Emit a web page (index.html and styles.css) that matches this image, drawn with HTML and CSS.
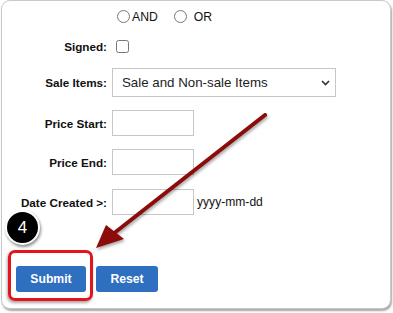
FILE: index.html
```html
<!DOCTYPE html>
<html>
<head>
<meta charset="utf-8">
<link rel="stylesheet" href="styles.css">
</head>
<body>
<div class="stage">
  <div class="card">
    <form class="form">
      <div class="row row-radio">
        <span class="label"></span>
        <div class="ctrl">
          <input type="radio" name="op" class="radio radio-and"><span class="opt">AND</span>
          <input type="radio" name="op" class="radio radio-or"><span class="opt">OR</span>
        </div>
      </div>
      <div class="row row-signed">
        <span class="label">Signed:</span>
        <div class="ctrl"><input type="checkbox" class="check"></div>
      </div>
      <div class="row row-sale">
        <span class="label">Sale Items:</span>
        <div class="ctrl">
          <div class="select-wrap">
            <select class="select"><option>Sale and Non-sale Items</option></select>
            <svg class="chev" width="9" height="6" viewBox="0 0 9 6"><path d="M1 1 L4.5 4.5 L8 1" fill="none" stroke="#333" stroke-width="1.6"/></svg>
          </div>
        </div>
      </div>
      <div class="row row-start">
        <span class="label">Price Start:</span>
        <div class="ctrl"><input type="text" class="text"></div>
      </div>
      <div class="row row-end">
        <span class="label">Price End:</span>
        <div class="ctrl"><input type="text" class="text"></div>
      </div>
      <div class="row row-date">
        <span class="label">Date Created &gt;:</span>
        <div class="ctrl"><input type="text" class="text"><span class="hint">yyyy-mm-dd</span></div>
      </div>
      <div class="buttons">
        <button type="button" class="btn btn-submit">Submit</button>
        <button type="button" class="btn btn-reset">Reset</button>
      </div>
    </form>
  </div>
  <div class="highlight"></div>
  <div class="badge">4</div>
  <svg class="arrow" width="393" height="313" viewBox="0 0 393 313">
    <line x1="265" y1="115" x2="113" y2="234" stroke="#8c0b0b" stroke-width="4" stroke-linecap="round"/>
    <polygon points="96,248 106,225 124,239" fill="#8c0b0b"/>
  </svg>
</div>
</body>
</html>
```
FILE: styles.css
```css
html, body {
  margin: 0;
  padding: 0;
  background: #ffffff;
}
body {
  font-family: "Liberation Sans", Arial, sans-serif;
  color: #111;
}
.stage {
  position: relative;
  width: 393px;
  height: 313px;
  overflow: hidden;
}
.card {
  box-sizing: border-box;
  margin-left: 1px;
  width: 390px;
  height: 309px;
  border: 1px solid #c9c9c9;
  border-radius: 9px;
  box-shadow: 1px 2px 2px rgba(0, 0, 0, 0.35);
  background: #fff;
}
.form {
  display: flex;
  flex-direction: column;
}
.row {
  display: flex;
  align-items: center;
}
.label {
  width: 105px;
  flex: none;
  text-align: right;
  font-weight: bold;
  font-size: 11.7px;
  color: #111;
  margin-right: 5px;
}
.ctrl {
  display: flex;
  align-items: center;
}
.row-radio { height: 30px; }
.row-signed { height: 30px; }
.row-sale { height: 29px; margin-top: 7px; }
.row-start { height: 26px; margin-top: 13px; }
.row-end { height: 26px; margin-top: 13px; }
.row-date { height: 26px; margin-top: 14px; }

.radio {
  width: 13px;
  height: 13px;
  margin: 0;
}
.radio-and { margin-left: 5px; margin-right: 2px; }
.radio-or { margin-left: 16px; margin-right: 7px; }
.opt {
  font-size: 12.2px;
  color: #111;
  margin-top: 1px;
}
.check {
  width: 13px;
  height: 13px;
  margin: 0 0 0 4px;
}
.select-wrap {
  position: relative;
  width: 224px;
  height: 29px;
}
.select {
  -webkit-appearance: none;
  appearance: none;
  box-sizing: border-box;
  width: 224px;
  height: 29px;
  border: 1px solid #c6c6c6;
  border-radius: 0;
  background: #fff;
  padding: 0 0 0 9px;
  font-family: "Liberation Sans", Arial, sans-serif;
  font-size: 13.3px;
  color: #222;
  margin: 0;
}
.chev {
  position: absolute;
  left: 209px;
  top: 12px;
  pointer-events: none;
}
.text {
  box-sizing: border-box;
  width: 82px;
  height: 26px;
  border: 1px solid #c6c6c6;
  border-radius: 0;
  margin: 0;
  padding: 0 4px;
  background: #fff;
}
.hint {
  font-size: 12.1px;
  color: #111;
  margin-left: 3px;
}
.buttons {
  display: flex;
  gap: 10px;
  margin-top: 51px;
  padding-left: 14px;
}
.btn {
  box-sizing: border-box;
  height: 26px;
  border: none;
  border-radius: 3px;
  background: #2e6fc0;
  color: #fff;
  font-family: "Liberation Sans", Arial, sans-serif;
  font-weight: bold;
  font-size: 12.2px;
  padding: 0;
  margin: 0;
}
.btn-submit { width: 70px; }
.btn-reset { width: 62px; }

.highlight {
  position: absolute;
  left: 8px;
  top: 250px;
  width: 85px;
  height: 51px;
  box-sizing: border-box;
  border: 3px solid #e3141c;
  border-radius: 7px;
  box-shadow: -1px 2px 3px rgba(0, 0, 0, 0.35);
}
.badge {
  position: absolute;
  left: 5px;
  top: 210px;
  width: 31px;
  height: 31px;
  border: 2px solid #fff;
  border-radius: 50%;
  background: #000;
  color: #fff;
  font-family: "Liberation Sans", Arial, sans-serif;
  font-size: 17px;
  line-height: 31px;
  text-align: center;
  box-shadow: 1px 2px 3px rgba(0, 0, 0, 0.45);
}
.arrow {
  position: absolute;
  left: 0;
  top: 0;
  pointer-events: none;
  filter: drop-shadow(1px 2px 1.5px rgba(0, 0, 0, 0.35));
}
```
